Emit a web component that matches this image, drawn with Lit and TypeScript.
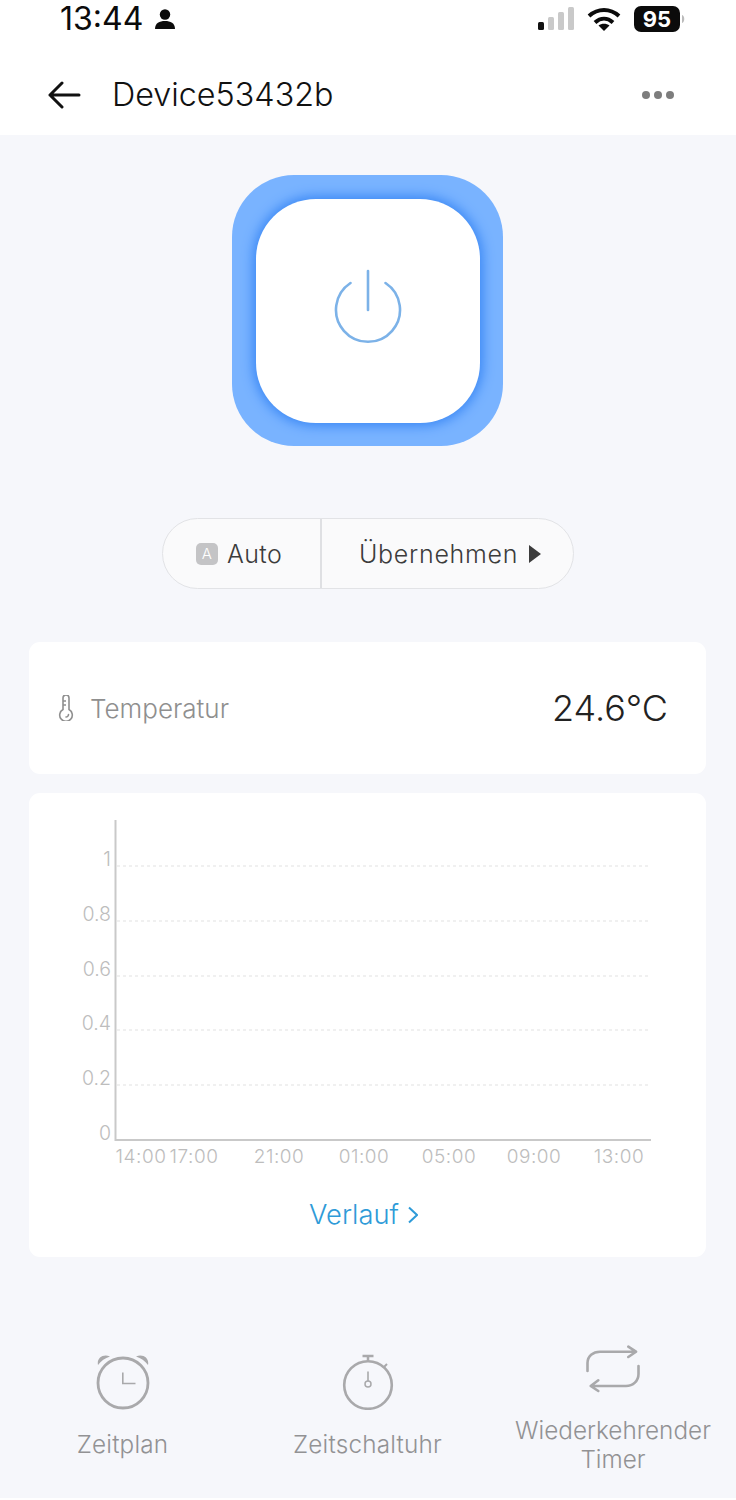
import { LitElement, html, css, svg } from "lit";
import { customElement } from "lit/decorators.js";

const yTicks: [string, number][] = [["1", 866], ["0.8", 921], ["0.6", 976], ["0.4", 1030], ["0.2", 1085]];
const xTicks: [string, number][] = [["14:00", 141], ["17:00", 194], ["21:00", 279], ["01:00", 364], ["05:00", 449], ["09:00", 534], ["13:00", 619]];

@customElement("app-root")
export class AppRoot extends LitElement {
  static styles = css`
    :host { display: flex; flex-direction: column; width: 736px; height: 1500px; background: #f6f7fb; font-family: Inter, "Liberation Sans", sans-serif; overflow: hidden; }
    .head { background: #fff; height: 135px; flex: none; display: flex; flex-direction: column; }
    .status { height: 38px; display: flex; align-items: center; padding: 0 0 0 60px; color: #0b0b0b; }
    .time { font-size: 32px; font-weight: 400; line-height: 38px; letter-spacing: 0; }
    .person { margin-left: 11px; margin-top: -1px; }
    .sig { margin-left: auto; margin-right: 11px; }
    .wifi { margin-right: 13px; }
    .batt { margin-right: 50px; }
    .nav { flex: 1; display: flex; align-items: center; padding: 16px 60px 0 47px; }
    .title { margin-left: 31px; font-size: 32.3px; font-weight: 300; color: #111; }
    .more { margin-left: auto; }
    .power { width: 271px; height: 271px; flex: none; margin: 40px 0 0 232px; background: #79b3ff; border-radius: 62px; display: flex; align-items: center; justify-content: center; }
    .inner { width: 224px; height: 224px; background: #fff; border-radius: 60px; box-shadow: 0 0 12px 3px #3b88f5; display: flex; align-items: center; justify-content: center; }
    .inner svg { margin-bottom: 7px; }
    .pill { width: 412px; height: 71px; flex: none; box-sizing: border-box; margin: 72px 0 0 162px; border: 1.5px solid #e2e3e6; border-radius: 36px; background: #fafafb; display: flex; color: #3c3c3c; font-size: 25px; font-weight: 300; letter-spacing: 0.4px; }
    .seg-a { width: 159px; border-right: 2px solid #dfe0e3; display: flex; align-items: center; padding-left: 33px; box-sizing: border-box; gap: 9px; }
    .seg-b { flex: 1; display: flex; align-items: center; padding-left: 37px; gap: 11px; letter-spacing: 0.7px; }
    .a { width: 22px; height: 22px; background: #c4c4c6; border-radius: 5px; color: #fff; font-size: 15px; display: flex; align-items: center; justify-content: center; }
    .card { width: 677px; flex: none; margin-left: 29px; background: #fff; border-radius: 11px; }
    .temp { height: 132px; margin-top: 53px; display: flex; align-items: center; padding: 0 38px 0 29px; box-sizing: border-box; color: #8f8f8f; font-size: 26px; font-weight: 300; gap: 16px; }
    .value { margin-left: auto; font-size: 36px; font-weight: 300; color: #222; }
    .chart { height: 464px; margin-top: 19px; display: flex; flex-direction: column; }
    .chart svg { display: block; }
    .lab-y { font-size: 19.5px; font-weight: 300; fill: #bdbdbd; text-anchor: end; }
    .lab-x { font-size: 19px; font-weight: 300; fill: #bdbdbd; text-anchor: middle; letter-spacing: 0.5px; }
    .link { display: flex; justify-content: center; align-items: center; gap: 9px; color: #2f9bd8; font-size: 27.3px; font-weight: 300; margin-top: 25px; padding-right: 8px; }
    .tabs { display: grid; grid-template-columns: 245px 245px 246px; align-items: center; margin-top: 88px; flex: none; }
    .tab { display: flex; flex-direction: column; align-items: center; color: #929294; font-size: 24.3px; font-weight: 300; line-height: 29px; text-align: center; }
    .one { padding-bottom: 5px; letter-spacing: 0.2px; }
    .ic { display: flex; justify-content: center; margin-bottom: 20px; }
    .ic svg { display: block; }
    .ic.tall { margin-bottom: 22.5px; }
    .bottom { height: 2px; background: #fff; margin-top: auto; flex: none; }
  `;

  private chart() {
    return svg`
      ${yTicks.map(([l, y]) => svg`
        <line x1="88" x2="620" y1=${y - 793} y2=${y - 793} stroke="#ececec" stroke-width="1.500" stroke-dasharray="3 3"></line>
        <text class="lab-y" x="82" y=${y - 793}>${l}</text>`)}
      <text class="lab-y" x="82" y="347">0</text>
      <path d="M86.500 27V347H622" fill="none" stroke="#c9c9c9" stroke-width="2"></path>
      ${xTicks.map(([l, x]) => svg`<text class="lab-x" x=${x - 29} y="370">${l}</text>`)}
    `;
  }

  render() {
    return html`
      <div class="head">
        <div class="status">
          <span class="time">13:44</span>
          <svg class="person" width="22" height="22" viewBox="0 0 22 22"><circle cx="11" cy="6.500" r="5.200" fill="#0b0b0b"></circle><path d="M1 21c0-6 4.500-8 10-8s10 2 10 8z" fill="#0b0b0b"></path></svg>
          <svg class="sig" width="38" height="24" viewBox="0 0 38 24"><rect x="0" y="15" width="6" height="8" rx="1.500" fill="#111"></rect><rect x="10" y="10" width="6" height="13" rx="1.500" fill="#c9c9c9"></rect><rect x="20" y="5" width="6" height="18" rx="1.500" fill="#c9c9c9"></rect><rect x="30" y="0" width="6" height="23" rx="1.500" fill="#c9c9c9"></rect></svg>
          <svg class="wifi" width="34" height="25" viewBox="0 0 34 25" fill="none" stroke="#0b0b0b" stroke-width="4"><path d="M2 9c9-8 21-8 30 0"></path><path d="M8 15.500c5.500-5 12.500-5 18 0"></path><path d="M17 24l-5.500-5.500c3-2.500 8-2.500 11 0z" fill="#0b0b0b" stroke="none"></path></svg>
          <svg class="batt" width="52" height="27" viewBox="0 0 52 27"><rect x="0" y="0" width="46" height="26" rx="7" fill="#0b0b0b"></rect><path d="M48 9c3 1 3 7 0 8z" fill="#bbb"></path><text x="23" y="21" text-anchor="middle" font-family="Inter, sans-serif" font-weight="700" font-size="22" fill="#fff">95</text></svg>
        </div>
        <div class="nav">
          <svg width="34" height="28" viewBox="0 0 34 28" fill="none" stroke="#111" stroke-width="3" stroke-linecap="round" stroke-linejoin="round"><path d="M3 14H32M15 2L3 14l12 12"></path></svg>
          <span class="title">Device53432b</span>
          <svg class="more" width="36" height="12" viewBox="0 0 36 12" fill="#7d7d7d"><circle cx="6" cy="6" r="4"></circle><circle cx="18" cy="6" r="4"></circle><circle cx="30" cy="6" r="4"></circle></svg>
        </div>
      </div>

      <div class="power"><div class="inner">
        <svg width="70" height="76" viewBox="0 0 70 76" fill="none" stroke="#7cb2e8" stroke-width="2.600" stroke-linecap="round"><path d="M35 2V41"></path><path d="M17.500 14A32 32 0 1 0 52.500 14"></path></svg>
      </div></div>

      <div class="pill">
        <div class="seg-a"><span class="a">A</span><span>Auto</span></div>
        <div class="seg-b"><span>Übernehmen</span><svg width="12" height="18" viewBox="0 0 12 18"><path d="M0 0L12 9L0 18z" fill="#3c3c3c"></path></svg></div>
      </div>

      <div class="card temp">
        <svg width="16" height="26" viewBox="0 0 16 26" fill="none" stroke="#8f8f8f" stroke-width="1.600"><path d="M5 3a3 3 0 0 1 6 0v11.500a6.300 6.300 0 1 1-6 0z"></path><path d="M5 6h3M5 10h3"></path><path d="M8 22a2.500 2.500 0 0 0 2.500-2.500" stroke-linecap="round"></path></svg>
        <span>Temperatur</span>
        <span class="value">24.6°C</span>
      </div>

      <div class="card chart">
        <svg width="677" height="380" viewBox="0 0 677 380">${this.chart()}</svg>
        <div class="link"><span>Verlauf</span><svg width="10" height="18" viewBox="0 0 10 18" fill="none" stroke="#2f9bd8" stroke-width="2"><path d="M1 1.500L9 9L1 16.500"></path></svg></div>
      </div>

      <div class="tabs">
        <div class="tab one">
          <div class="ic"><svg width="56" height="56" viewBox="0 0 56 56" fill="none" stroke="#a9a9ab" stroke-width="2.800"><circle cx="28" cy="29" r="25"></circle><path d="M27.800 18.500V29.500H40.500" stroke-width="1.600"></path><path d="M3 11C1.500 4 8 -.5 15 2.500C10 4 6 7 3 11z" fill="#a9a9ab" stroke="none"></path><path d="M53 11C54.500 4 48 -.5 41 2.500C46 4 50 7 53 11z" fill="#a9a9ab" stroke="none"></path></svg></div>
          <span>Zeitplan</span>
        </div>
        <div class="tab one">
          <div class="ic"><svg width="54" height="56" viewBox="0 0 54 56" fill="none" stroke="#a9a9ab" stroke-width="2.600"><circle cx="27" cy="31" r="23.800"></circle><path d="M27 7V2M21.500 2H32.500" stroke-width="2.500"></path><path d="M27 17.500V27" stroke-width="1.600"></path><circle cx="27" cy="30" r="3" stroke-width="1.500"></circle><path d="M43 13l3-3" stroke-width="2"></path></svg></div>
          <span>Zeitschaltuhr</span>
        </div>
        <div class="tab">
          <div class="ic tall"><svg width="56" height="48" viewBox="0 0 56 48" fill="none" stroke="#a9a9ab" stroke-width="2.600" stroke-linecap="round" stroke-linejoin="round"><path d="M2.500 26V18C2.500 11 8 6.700 15 6.700H50M43.300 1.700L51 6.700L43.300 12"></path><path d="M53.500 21V29C53.500 36 48 41 41 41H7M13.300 35.300L5.700 41L13.300 46"></path></svg></div>
          <span>Wiederkehrender<br />Timer</span>
        </div>
      </div>
      <div class="bottom"></div>
    `;
  }
}
